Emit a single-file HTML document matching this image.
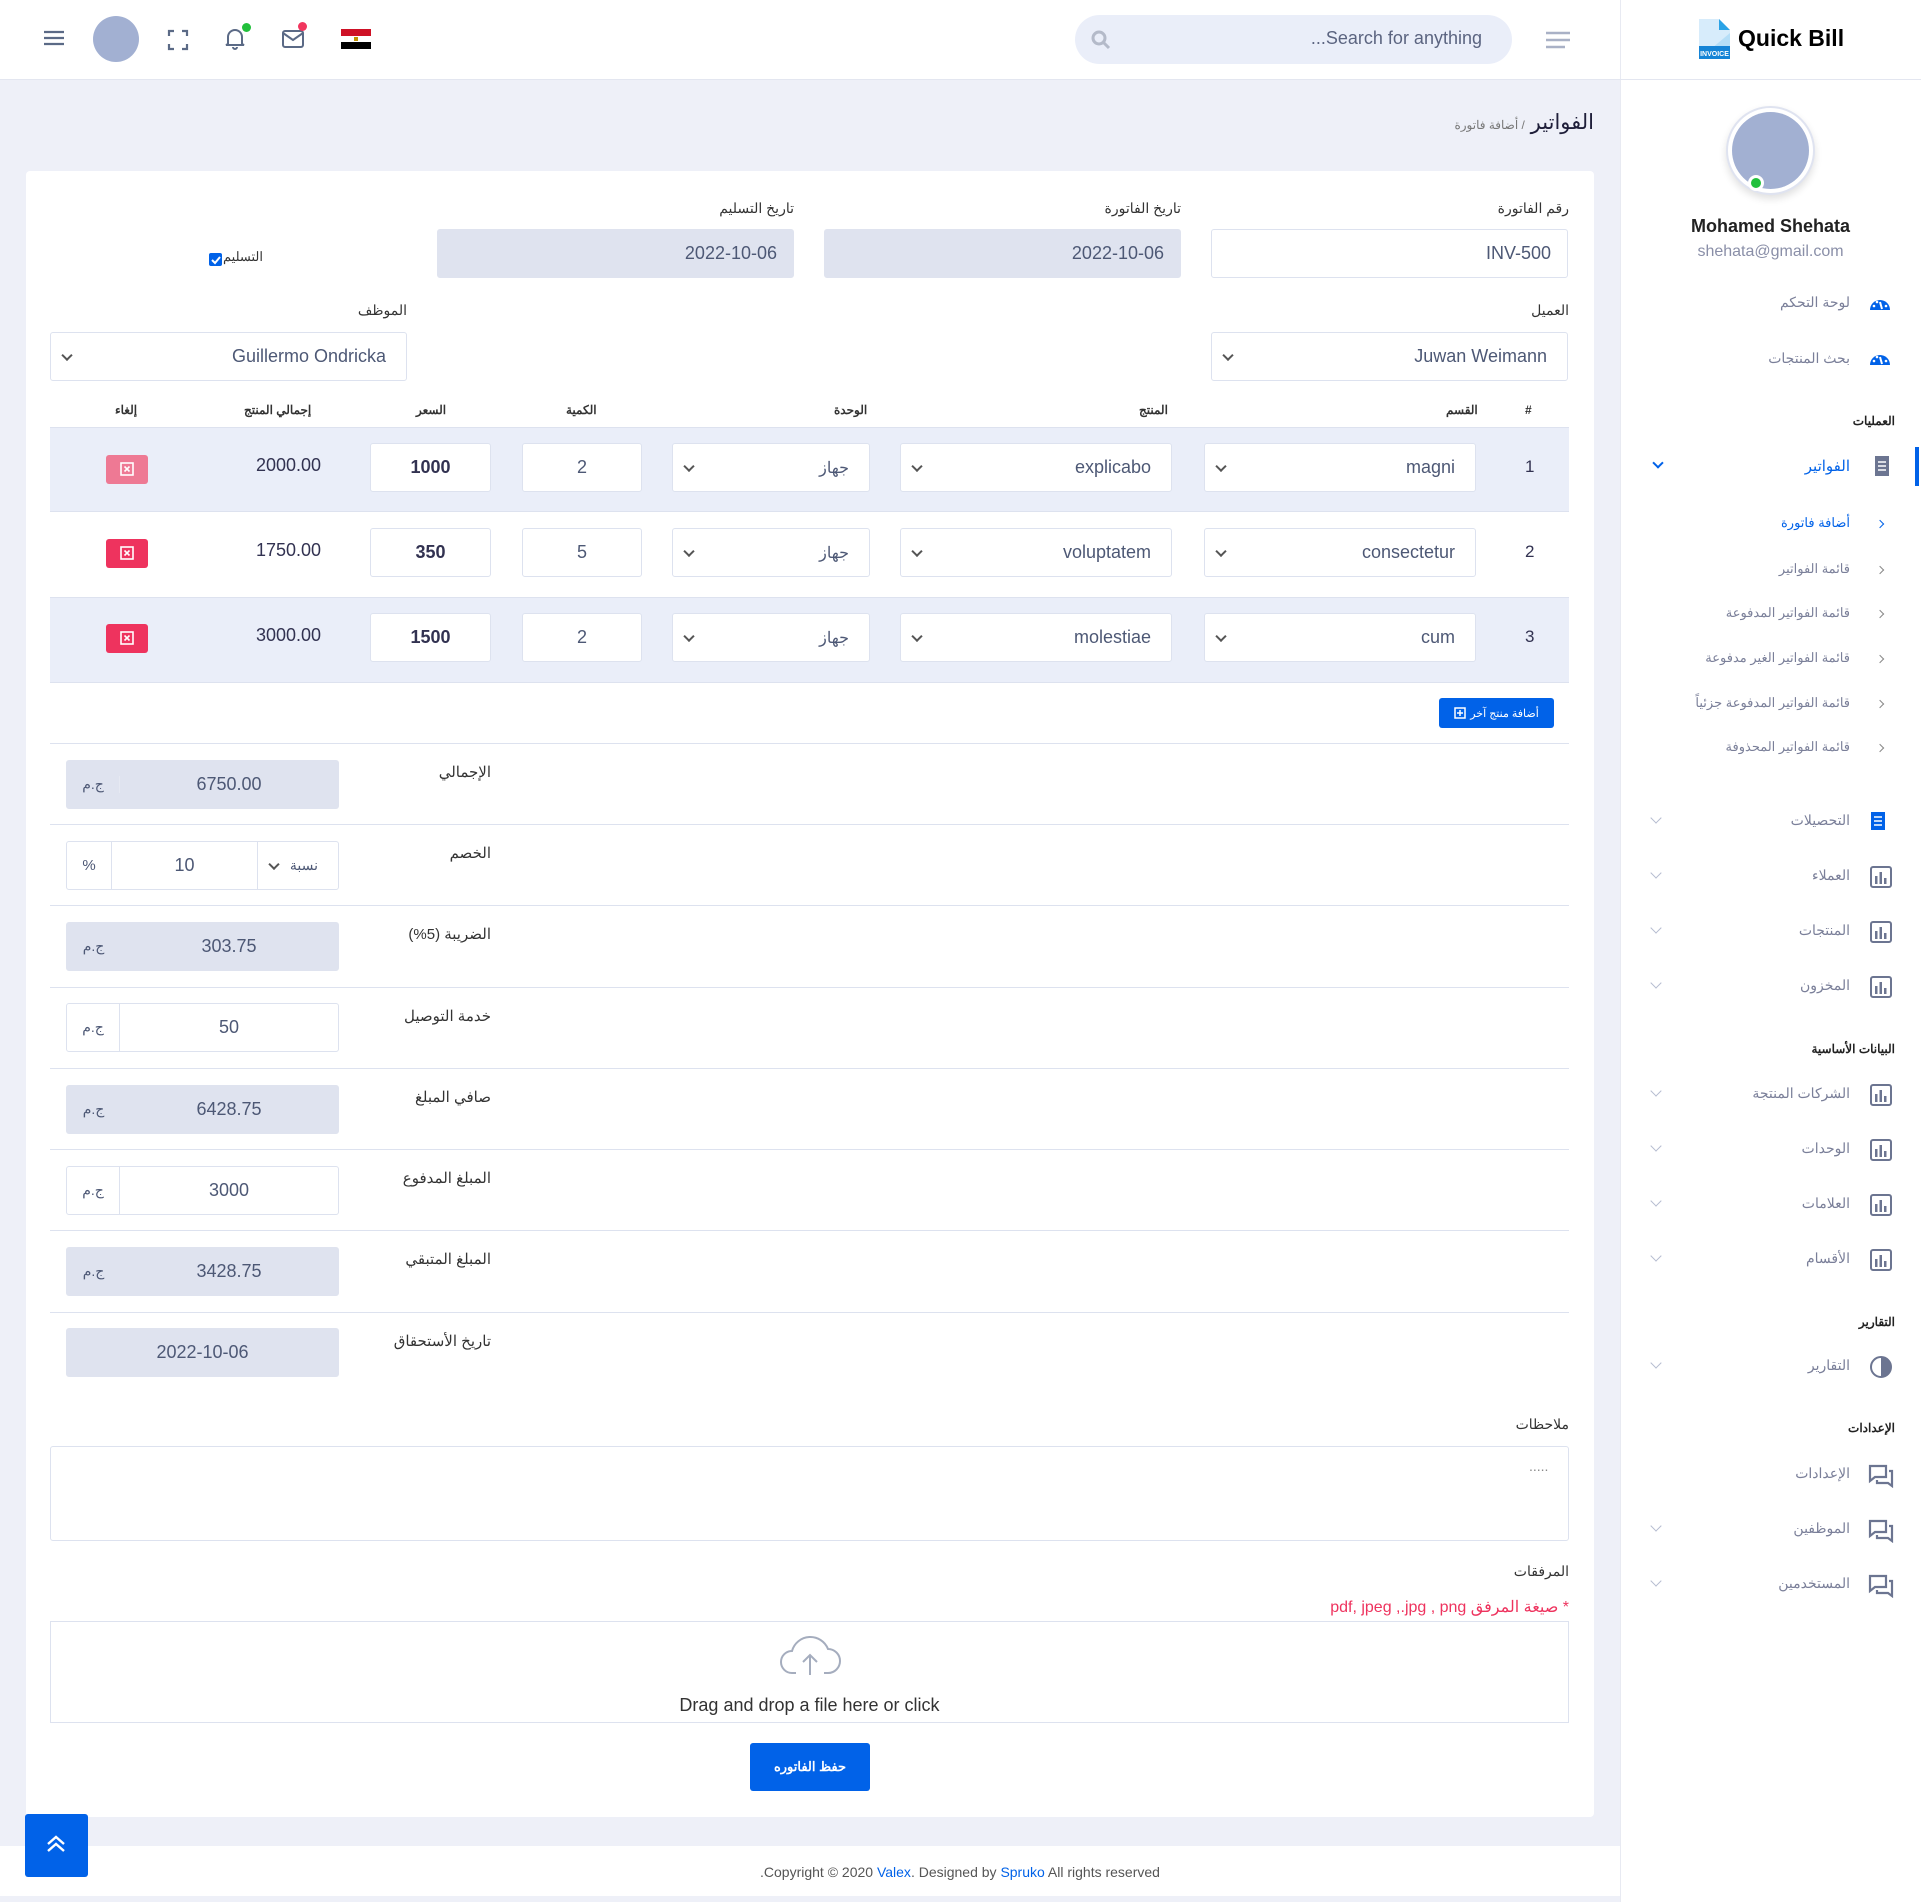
<!DOCTYPE html>
<html><head><meta charset="utf-8"><style>
*{box-sizing:border-box;margin:0;padding:0}
body{width:1921px;height:1902px;position:relative;background:#eef0f8;font-family:"Liberation Sans","Noto Sans CJK SC",sans-serif;color:#323251;overflow:hidden}
.a{position:absolute}
.lbl{position:absolute;font-size:14px;color:#333;text-align:right;white-space:nowrap;direction:rtl}
.inp{position:absolute;border:1px solid #dde2ef;background:#fff;border-radius:3px;font-size:18px;color:#4d5875;display:flex;align-items:center}
.ro{background:#dfe3ef;border-color:#dfe3ef}
.sel .ch{position:absolute;left:12px;top:50%;width:8px;height:8px;border-right:2px solid #555;border-bottom:2px solid #555;transform:translateY(-70%) rotate(45deg)}
.row{position:absolute;left:50px;width:1519px;border-bottom:1px solid #dde2ef}
.sb{position:absolute;right:71px;font-size:14px;color:#7a7f99;direction:rtl;white-space:nowrap}
.ico{position:absolute;left:1869px;width:22px;height:20px}
.chev{position:absolute;left:1652px;width:8px;height:8px;border-right:1.5px solid #b5bcd0;border-bottom:1.5px solid #b5bcd0;transform:rotate(45deg)}
.sec{position:absolute;right:26px;font-size:12px;font-weight:bold;color:#222;direction:rtl}
.sub{position:absolute;right:71px;font-size:13px;color:#7a7f99;direction:rtl;white-space:nowrap}
.subc{position:absolute;left:1877px;width:6px;height:6px;border-right:1.5px solid #888;border-bottom:1.5px solid #888;transform:rotate(-45deg)}
</style></head><body>

<!-- header -->
<div class="a" style="left:0;top:0;width:1620px;height:80px;background:#fff;border-bottom:1px solid #e3e6f0"></div>
<svg class="a" style="left:42px;top:28px" width="24" height="20"><g stroke="#5b6a86" stroke-width="2.2"><line x1="2" y1="4" x2="22" y2="4"/><line x1="2" y1="10" x2="22" y2="10"/><line x1="2" y1="16" x2="22" y2="16"/></g></svg>
<div class="a" style="left:93px;top:16px;width:46px;height:46px;border-radius:50%;background:#a2b0d2"></div>
<svg class="a" style="left:167px;top:29px" width="22" height="22" fill="none" stroke="#5b6a86" stroke-width="2.2"><path d="M2 7V2h5M15 2h5v5M20 15v5h-5M7 20H2v-5"/></svg>
<svg class="a" style="left:223px;top:26px" width="26" height="26" fill="none" stroke="#5b6a86" stroke-width="2"><path d="M5 18V11a7 7 0 0 1 14 0v7l2 1H3z"/><path d="M10 21a2 2 0 0 0 4 0"/></svg>
<div class="a" style="left:242px;top:23px;width:9px;height:9px;border-radius:50%;background:#22c03c"></div>
<svg class="a" style="left:281px;top:29px" width="24" height="20" fill="none" stroke="#5b6a86" stroke-width="2"><rect x="2" y="2" width="20" height="16" rx="2"/><path d="M2 4l10 7 10-7"/></svg>
<div class="a" style="left:298px;top:22px;width:9px;height:9px;border-radius:50%;background:#f1365e"></div>
<div class="a" style="left:341px;top:29px;width:30px;height:20px"><div style="height:7px;background:#ce1126"></div><div style="height:6px;background:#fff;position:relative"><div style="position:absolute;left:13px;top:1px;width:4px;height:4px;background:#c09300"></div></div><div style="height:7px;background:#000"></div></div>
<div class="a" style="left:1075px;top:15px;width:437px;height:49px;border-radius:25px;background:#eaeef9"></div>
<svg class="a" style="left:1091px;top:30px" width="20" height="20" fill="none" stroke="#b4bac9" stroke-width="3"><circle cx="8" cy="8" r="6"/><line x1="12.5" y1="12.5" x2="18" y2="18"/></svg>
<div class="a" style="left:1200px;top:28px;width:282px;text-align:right;font-size:18px;color:#5b6480">...Search for anything</div>
<svg class="a" style="left:1545px;top:30px" width="26" height="20"><g stroke="#a9b1c6" stroke-width="2.5"><line x1="1" y1="3" x2="25" y2="3"/><line x1="1" y1="10" x2="25" y2="10"/><line x1="1" y1="17" x2="20" y2="17"/></g></svg>

<!-- sidebar -->
<div class="a" style="left:1620px;top:0;width:301px;height:1902px;background:#fff;border-left:1px solid #e8eaf2"></div>
<div class="a" style="left:1620px;top:79px;width:301px;height:1px;background:#e3e6f0"></div>
<svg class="a" style="left:1699px;top:19px" width="31" height="40"><path d="M0 0H20L31 11V40H0Z" fill="#d7ecfb"/><path d="M20 0L31 11H20Z" fill="#2ba3e6"/><path d="M0 40L31 14V40Z" fill="#b5def7"/><rect x="0" y="27" width="31" height="13" fill="#1584d6"/><text x="15.5" y="37" font-size="7" font-weight="bold" fill="#fff" text-anchor="middle" font-family="Liberation Sans">INVOICE</text></svg>
<div class="a" style="left:1738px;top:25px;font-size:23px;font-weight:bold;color:#000">Quick Bill</div>
<div class="a" style="left:1726px;top:106px;width:89px;height:89px;border-radius:50%;background:#fff;border:2px solid #dfe3f0;box-shadow:0 4px 8px rgba(0,0,0,.12)"></div>
<div class="a" style="left:1732px;top:112px;width:77px;height:77px;border-radius:50%;background:#a2b0d2"></div>
<div class="a" style="left:1748px;top:175px;width:16px;height:16px;border-radius:50%;background:#22c03c;border:3px solid #fff"></div>
<div class="a" style="left:1620px;top:216px;width:301px;text-align:center;font-size:18px;font-weight:bold;color:#222">Mohamed Shehata</div>
<div class="a" style="left:1620px;top:243px;width:301px;text-align:center;font-size:16px;color:#8a8fa8">shehata@gmail.com</div>

<svg class="ico" style="top:294px" viewBox="0 0 22 20"><path d="M1 16a10 10 0 0 1 20 0z" fill="#0162e8"/><path d="M11 8l2 7" stroke="#fff" stroke-width="2"/><circle cx="5" cy="12" r="1.3" fill="#fff"/><circle cx="17" cy="12" r="1.3" fill="#fff"/><circle cx="8" cy="8" r="1.3" fill="#fff"/></svg>
<div class="sb" style="top:294px">لوحة التحكم</div>
<svg class="ico" style="top:349px" viewBox="0 0 22 20"><path d="M1 16a10 10 0 0 1 20 0z" fill="#0162e8"/><path d="M11 8l2 7" stroke="#fff" stroke-width="2"/><circle cx="5" cy="12" r="1.3" fill="#fff"/><circle cx="17" cy="12" r="1.3" fill="#fff"/><circle cx="8" cy="8" r="1.3" fill="#fff"/></svg>
<div class="sb" style="top:350px">بحث المنتجات</div>
<div class="sec" style="top:414px">العمليات</div>
<svg class="ico" style="top:456px;left:1871px" width="14" height="20" viewBox="0 0 14 20"><rect width="14" height="20" fill="#6c7591"/><g stroke="#fff" stroke-width="1.5"><line x1="3" y1="6" x2="11" y2="6"/><line x1="3" y1="10" x2="11" y2="10"/><line x1="3" y1="14" x2="11" y2="14"/></g></svg>
<div class="sb" style="top:457px;color:#0162e8;font-size:15px">الفواتير</div>
<div class="a" style="left:1654px;top:459px;width:8px;height:8px;border-right:2px solid #0162e8;border-bottom:2px solid #0162e8;transform:rotate(45deg)"></div>
<div class="a" style="left:1915px;top:447px;width:4px;height:39px;background:#0162e8"></div>
<div class="subc" style="top:521px;border-color:#0162e8"></div><div class="sub" style="top:515px;color:#0162e8">أضافة فاتورة</div>
<div class="subc" style="top:567px"></div><div class="sub" style="top:561px">قائمة الفواتير</div>
<div class="subc" style="top:611px"></div><div class="sub" style="top:605px">قائمة الفواتير المدفوعة</div>
<div class="subc" style="top:656px"></div><div class="sub" style="top:650px">قائمة الفواتير الغير مدفوعة</div>
<div class="subc" style="top:701px"></div><div class="sub" style="top:695px">قائمة الفواتير المدفوعة جزئياً</div>
<div class="subc" style="top:745px"></div><div class="sub" style="top:739px">قائمة الفواتير المحذوفة</div>

<svg class="ico" style="top:812px;left:1871px" width="14" height="18"><rect width="14" height="18" fill="#0162e8"/><g stroke="#fff" stroke-width="1.5"><line x1="3" y1="5" x2="11" y2="5"/><line x1="3" y1="9" x2="11" y2="9"/><line x1="3" y1="13" x2="11" y2="13"/></g></svg>
<div class="sb" style="top:812px">التحصيلات</div><div class="chev" style="top:814px"></div>

<div class="sb" style="top:867px">العملاء</div><div class="chev" style="top:869px"></div>
<div class="sb" style="top:922px">المنتجات</div><div class="chev" style="top:924px"></div>
<div class="sb" style="top:977px">المخزون</div><div class="chev" style="top:979px"></div>
<div class="sec" style="top:1042px">البيانات الأساسية</div>
<div class="sb" style="top:1085px">الشركات المنتجة</div><div class="chev" style="top:1087px"></div>
<div class="sb" style="top:1140px">الوحدات</div><div class="chev" style="top:1142px"></div>
<div class="sb" style="top:1195px">العلامات</div><div class="chev" style="top:1197px"></div>
<div class="sb" style="top:1250px">الأقسام</div><div class="chev" style="top:1252px"></div>
<div class="sec" style="top:1315px">التقارير</div>
<div class="sb" style="top:1357px">التقارير</div><div class="chev" style="top:1359px"></div>
<div class="sec" style="top:1421px">الإعدادات</div>
<div class="sb" style="top:1465px">الإعدادات</div>
<div class="sb" style="top:1520px">الموظفين</div><div class="chev" style="top:1522px"></div>
<div class="sb" style="top:1575px">المستخدمين</div><div class="chev" style="top:1577px"></div>
<!-- bar chart icons -->
<svg class="a" style="left:1870px;top:866px" width="22" height="22"><rect x="1" y="1" width="20" height="20" rx="2" fill="none" stroke="#6c7591" stroke-width="2"/><g fill="#6c7591"><rect x="5" y="10" width="2.5" height="8"/><rect x="9.5" y="6" width="2.5" height="12"/><rect x="14" y="12" width="2.5" height="6"/></g></svg>
<svg class="a" style="left:1870px;top:921px" width="22" height="22"><rect x="1" y="1" width="20" height="20" rx="2" fill="none" stroke="#6c7591" stroke-width="2"/><g fill="#6c7591"><rect x="5" y="10" width="2.5" height="8"/><rect x="9.5" y="6" width="2.5" height="12"/><rect x="14" y="12" width="2.5" height="6"/></g></svg>
<svg class="a" style="left:1870px;top:976px" width="22" height="22"><rect x="1" y="1" width="20" height="20" rx="2" fill="none" stroke="#6c7591" stroke-width="2"/><g fill="#6c7591"><rect x="5" y="10" width="2.5" height="8"/><rect x="9.5" y="6" width="2.5" height="12"/><rect x="14" y="12" width="2.5" height="6"/></g></svg>
<svg class="a" style="left:1870px;top:1084px" width="22" height="22"><rect x="1" y="1" width="20" height="20" rx="2" fill="none" stroke="#6c7591" stroke-width="2"/><g fill="#6c7591"><rect x="5" y="10" width="2.5" height="8"/><rect x="9.5" y="6" width="2.5" height="12"/><rect x="14" y="12" width="2.5" height="6"/></g></svg>
<svg class="a" style="left:1870px;top:1139px" width="22" height="22"><rect x="1" y="1" width="20" height="20" rx="2" fill="none" stroke="#6c7591" stroke-width="2"/><g fill="#6c7591"><rect x="5" y="10" width="2.5" height="8"/><rect x="9.5" y="6" width="2.5" height="12"/><rect x="14" y="12" width="2.5" height="6"/></g></svg>
<svg class="a" style="left:1870px;top:1194px" width="22" height="22"><rect x="1" y="1" width="20" height="20" rx="2" fill="none" stroke="#6c7591" stroke-width="2"/><g fill="#6c7591"><rect x="5" y="10" width="2.5" height="8"/><rect x="9.5" y="6" width="2.5" height="12"/><rect x="14" y="12" width="2.5" height="6"/></g></svg>
<svg class="a" style="left:1870px;top:1249px" width="22" height="22"><rect x="1" y="1" width="20" height="20" rx="2" fill="none" stroke="#6c7591" stroke-width="2"/><g fill="#6c7591"><rect x="5" y="10" width="2.5" height="8"/><rect x="9.5" y="6" width="2.5" height="12"/><rect x="14" y="12" width="2.5" height="6"/></g></svg>
<svg class="a" style="left:1869px;top:1355px" width="24" height="24"><circle cx="12" cy="12" r="10" fill="none" stroke="#6c7591" stroke-width="2"/><path d="M12 2a10 10 0 0 1 0 20z" fill="#6c7591"/></svg>
<svg class="a" style="left:1868px;top:1464px" width="26" height="24"><path d="M2 2h16v11H7l-5 4z" fill="none" stroke="#6c7591" stroke-width="2.2"/><path d="M21 7h3v15l-4-3H9v-3" fill="none" stroke="#6c7591" stroke-width="2.2"/></svg>
<svg class="a" style="left:1868px;top:1519px" width="26" height="24"><path d="M2 2h16v11H7l-5 4z" fill="none" stroke="#6c7591" stroke-width="2.2"/><path d="M21 7h3v15l-4-3H9v-3" fill="none" stroke="#6c7591" stroke-width="2.2"/></svg>
<svg class="a" style="left:1868px;top:1574px" width="26" height="24"><path d="M2 2h16v11H7l-5 4z" fill="none" stroke="#6c7591" stroke-width="2.2"/><path d="M21 7h3v15l-4-3H9v-3" fill="none" stroke="#6c7591" stroke-width="2.2"/></svg>

<!-- breadcrumb -->
<div class="a" style="right:327px;top:110px;font-size:21px;color:#1f1f3a;direction:rtl;white-space:nowrap">الفواتير <span style="font-size:12px;color:#777">/ أضافة فاتورة</span></div>

<!-- card -->
<div class="a" style="left:26px;top:171px;width:1568px;height:1646px;background:#fff;border-radius:4px"></div>

<div class="lbl" style="right:352px;top:200px">رقم الفاتورة</div>
<div class="lbl" style="right:740px;top:200px">تاريخ الفاتورة</div>
<div class="lbl" style="right:1127px;top:200px">تاريخ التسليم</div>
<div class="inp" style="left:1211px;top:229px;width:357px;height:49px;justify-content:flex-end;padding-right:16px">INV-500</div>
<div class="inp ro" style="left:824px;top:229px;width:357px;height:49px;justify-content:flex-end;padding-right:16px">2022-10-06</div>
<div class="inp ro" style="left:437px;top:229px;width:357px;height:49px;justify-content:flex-end;padding-right:16px">2022-10-06</div>
<div class="a" style="left:209px;top:253px;width:13px;height:13px;background:#0162e8;border-radius:2px"></div>
<svg class="a" style="left:210px;top:254px" width="11" height="11"><path d="M2 6l3 3 5-6" fill="none" stroke="#fff" stroke-width="2"/></svg>
<div class="lbl" style="left:223px;top:249px;font-size:13px">التسليم</div>

<div class="lbl" style="right:352px;top:302px">العميل</div>
<div class="lbl" style="right:1514px;top:302px">الموظف</div>
<div class="inp sel" style="left:1211px;top:332px;width:357px;height:49px;justify-content:flex-end;padding-right:20px"><span class="ch"></span>Juwan Weimann</div>
<div class="inp sel" style="left:50px;top:332px;width:357px;height:49px;justify-content:flex-end;padding-right:20px"><span class="ch"></span>Guillermo Ondricka</div>

<!-- table header -->
<div class="lbl" style="left:1525px;top:403px;font-size:12px;font-weight:bold">#</div>
<div class="lbl" style="left:1446px;top:403px;font-size:12px;font-weight:bold">القسم</div>
<div class="lbl" style="left:1139px;top:403px;font-size:12px;font-weight:bold">المنتج</div>
<div class="lbl" style="left:834px;top:403px;font-size:12px;font-weight:bold">الوحدة</div>
<div class="lbl" style="left:566px;top:403px;font-size:12px;font-weight:bold">الكمية</div>
<div class="lbl" style="left:416px;top:403px;font-size:12px;font-weight:bold">السعر</div>
<div class="lbl" style="left:244px;top:403px;font-size:12px;font-weight:bold">إجمالي المنتج</div>
<div class="lbl" style="left:115px;top:403px;font-size:12px;font-weight:bold">إلغاء</div>

<div class="a" style="left:50px;top:427px;width:1519px;height:85px;background:#eaeef9;border-top:1px solid #dde2ef;border-bottom:1px solid #dde2ef"></div>
<div class="a" style="left:50px;top:512px;width:1519px;height:86px;background:#fff;border-bottom:1px solid #dde2ef"></div>
<div class="a" style="left:50px;top:598px;width:1519px;height:85px;background:#eaeef9;border-bottom:1px solid #dde2ef"></div>

<!-- rows: y tops 443, 528, 613 -->
<div class="a" style="left:1525px;top:457px;font-size:17px">1</div>
<div class="inp sel" style="left:1204px;top:443px;width:272px;height:49px;justify-content:flex-end;padding-right:20px"><span class="ch"></span>magni</div>
<div class="inp sel" style="left:900px;top:443px;width:272px;height:49px;justify-content:flex-end;padding-right:20px"><span class="ch"></span>explicabo</div>
<div class="inp sel" style="left:672px;top:443px;width:198px;height:49px;justify-content:flex-end;padding-right:20px;font-size:16px"><span class="ch"></span>جهاز</div>
<div class="inp" style="left:522px;top:443px;width:120px;height:49px;justify-content:center">2</div>
<div class="inp" style="left:370px;top:443px;width:121px;height:49px;justify-content:center;font-weight:bold;color:#323251">1000</div>
<div class="a" style="left:256px;top:455px;font-size:18px">2000.00</div>
<div class="a" style="left:106px;top:455px;width:42px;height:29px;border-radius:3px;background:#ee7994"></div>

<div class="a" style="left:1525px;top:542px;font-size:17px">2</div>
<div class="inp sel" style="left:1204px;top:528px;width:272px;height:49px;justify-content:flex-end;padding-right:20px"><span class="ch"></span>consectetur</div>
<div class="inp sel" style="left:900px;top:528px;width:272px;height:49px;justify-content:flex-end;padding-right:20px"><span class="ch"></span>voluptatem</div>
<div class="inp sel" style="left:672px;top:528px;width:198px;height:49px;justify-content:flex-end;padding-right:20px;font-size:16px"><span class="ch"></span>جهاز</div>
<div class="inp" style="left:522px;top:528px;width:120px;height:49px;justify-content:center">5</div>
<div class="inp" style="left:370px;top:528px;width:121px;height:49px;justify-content:center;font-weight:bold;color:#323251">350</div>
<div class="a" style="left:256px;top:540px;font-size:18px">1750.00</div>
<div class="a" style="left:106px;top:539px;width:42px;height:29px;border-radius:3px;background:#ee335e"></div>

<div class="a" style="left:1525px;top:627px;font-size:17px">3</div>
<div class="inp sel" style="left:1204px;top:613px;width:272px;height:49px;justify-content:flex-end;padding-right:20px"><span class="ch"></span>cum</div>
<div class="inp sel" style="left:900px;top:613px;width:272px;height:49px;justify-content:flex-end;padding-right:20px"><span class="ch"></span>molestiae</div>
<div class="inp sel" style="left:672px;top:613px;width:198px;height:49px;justify-content:flex-end;padding-right:20px;font-size:16px"><span class="ch"></span>جهاز</div>
<div class="inp" style="left:522px;top:613px;width:120px;height:49px;justify-content:center">2</div>
<div class="inp" style="left:370px;top:613px;width:121px;height:49px;justify-content:center;font-weight:bold;color:#323251">1500</div>
<div class="a" style="left:256px;top:625px;font-size:18px">3000.00</div>
<div class="a" style="left:106px;top:624px;width:42px;height:29px;border-radius:3px;background:#ee335e"></div>
<!-- x icons -->
<svg class="a" style="left:120px;top:462px" width="14" height="14"><rect x="1" y="1" width="12" height="12" fill="none" stroke="#fff" stroke-width="1.6"/><path d="M4.5 4.5l5 5M9.5 4.5l-5 5" stroke="#fff" stroke-width="1.6"/></svg>
<svg class="a" style="left:120px;top:546px" width="14" height="14"><rect x="1" y="1" width="12" height="12" fill="none" stroke="#fff" stroke-width="1.6"/><path d="M4.5 4.5l5 5M9.5 4.5l-5 5" stroke="#fff" stroke-width="1.6"/></svg>
<svg class="a" style="left:120px;top:631px" width="14" height="14"><rect x="1" y="1" width="12" height="12" fill="none" stroke="#fff" stroke-width="1.6"/><path d="M4.5 4.5l5 5M9.5 4.5l-5 5" stroke="#fff" stroke-width="1.6"/></svg>

<div class="a" style="left:1439px;top:698px;width:115px;height:30px;background:#0162e8;border-radius:3px;color:#fff;font-size:11px;display:flex;align-items:center;justify-content:center;direction:rtl;gap:4px">أضافة منتج آخر <svg width="12" height="12"><rect x="1" y="1" width="10" height="10" fill="none" stroke="#fff" stroke-width="1.5"/><path d="M6 3v6M3 6h6" stroke="#fff" stroke-width="1.5"/></svg></div>

<!-- summary -->
<div class="row" style="top:743px"></div>
<div class="row" style="top:824px"></div>
<div class="row" style="top:905px"></div>
<div class="row" style="top:987px"></div>
<div class="row" style="top:1068px"></div>
<div class="row" style="top:1149px"></div>
<div class="row" style="top:1230px"></div>
<div class="row" style="top:1312px"></div>

<div class="lbl" style="right:1430px;top:763px;font-size:15px">الإجمالي</div>
<div class="inp ro" style="left:66px;top:760px;width:273px;height:49px"><div style="width:53px;text-align:center;font-size:14px;border-right:1px solid #e6e9f2">ج.م</div><div style="flex:1;text-align:center">6750.00</div></div>
<div class="lbl" style="right:1430px;top:844px;font-size:15px">الخصم</div>
<div class="inp" style="left:66px;top:841px;width:273px;height:49px"><div style="width:45px;text-align:center;font-size:15px;border-right:1px solid #dde2ef;height:100%;line-height:47px">%</div><div style="width:146px;text-align:center;border-right:1px solid #dde2ef;height:100%;line-height:47px">10</div><div class="sel" style="flex:1;position:relative;height:100%;text-align:right;padding-right:20px;line-height:47px;font-size:14px"><span class="ch"></span>نسبة</div></div>
<div class="lbl" style="right:1430px;top:925px;font-size:15px">الضريبة (5%)</div>
<div class="inp ro" style="left:66px;top:922px;width:273px;height:49px"><div style="width:53px;text-align:center;font-size:14px">ج.م</div><div style="flex:1;text-align:center">303.75</div></div>
<div class="lbl" style="right:1430px;top:1007px;font-size:15px">خدمة التوصيل</div>
<div class="inp" style="left:66px;top:1003px;width:273px;height:49px"><div style="width:53px;text-align:center;font-size:14px;border-right:1px solid #dde2ef;height:100%;line-height:47px">ج.م</div><div style="flex:1;text-align:center">50</div></div>
<div class="lbl" style="right:1430px;top:1088px;font-size:15px">صافي المبلغ</div>
<div class="inp ro" style="left:66px;top:1085px;width:273px;height:49px"><div style="width:53px;text-align:center;font-size:14px">ج.م</div><div style="flex:1;text-align:center">6428.75</div></div>
<div class="lbl" style="right:1430px;top:1169px;font-size:15px">المبلغ المدفوع</div>
<div class="inp" style="left:66px;top:1166px;width:273px;height:49px"><div style="width:53px;text-align:center;font-size:14px;border-right:1px solid #dde2ef;height:100%;line-height:47px">ج.م</div><div style="flex:1;text-align:center">3000</div></div>
<div class="lbl" style="right:1430px;top:1250px;font-size:15px">المبلغ المتبقي</div>
<div class="inp ro" style="left:66px;top:1247px;width:273px;height:49px"><div style="width:53px;text-align:center;font-size:14px">ج.م</div><div style="flex:1;text-align:center">3428.75</div></div>
<div class="lbl" style="right:1430px;top:1332px;font-size:15px">تاريخ الأستحقاق</div>
<div class="inp ro" style="left:66px;top:1328px;width:273px;height:49px;justify-content:center">2022-10-06</div>

<div class="lbl" style="right:352px;top:1416px">ملاحظات</div>
<div class="a" style="left:50px;top:1446px;width:1519px;height:95px;border:1px solid #dde2ef;border-radius:3px"></div>
<div class="a" style="left:1529px;top:1458px;font-size:14px;color:#888">.....</div>
<div class="lbl" style="right:352px;top:1563px">المرفقات</div>
<div class="a" style="right:352px;top:1597px;font-size:16px;color:#ee335e;direction:rtl;white-space:nowrap">* صيغة المرفق pdf, jpeg ,.jpg , png</div>
<div class="a" style="left:50px;top:1621px;width:1519px;height:102px;border:1px solid #dde2ef"></div>
<svg class="a" style="left:778px;top:1633px" width="64" height="44" fill="none" stroke="#a5adbe" stroke-width="2"><path d="M18 40H14A11 11 0 0 1 14 18 19 19 0 0 1 50 16 12 12 0 0 1 50 40H46"/><path d="M32 42V22M25 29l7-7 7 7"/></svg>
<div class="a" style="left:50px;top:1695px;width:1519px;text-align:center;font-size:18px;color:#333">Drag and drop a file here or click</div>
<div class="a" style="left:750px;top:1743px;width:120px;height:48px;background:#0162e8;border-radius:3px;color:#fff;font-size:13px;font-weight:bold;display:flex;align-items:center;justify-content:center">حفظ الفاتوره</div>

<!-- footer -->
<div class="a" style="left:0;top:1846px;width:1620px;height:50px;background:#fff"></div>
<div class="a" style="left:0;top:1864px;width:1920px;text-align:center;font-size:14px;color:#555">.Copyright © 2020 <span style="color:#0162e8">Valex</span>. Designed by <span style="color:#0162e8">Spruko</span> All rights reserved</div>
<div class="a" style="left:25px;top:1814px;width:63px;height:63px;background:#0162e8;border-radius:3px"></div>
<svg class="a" style="left:45px;top:1833px" width="22" height="22" fill="none" stroke="#fff" stroke-width="2.4"><path d="M3 11l8-7 8 7M3 18l8-7 8 7"/></svg>
</body></html>
